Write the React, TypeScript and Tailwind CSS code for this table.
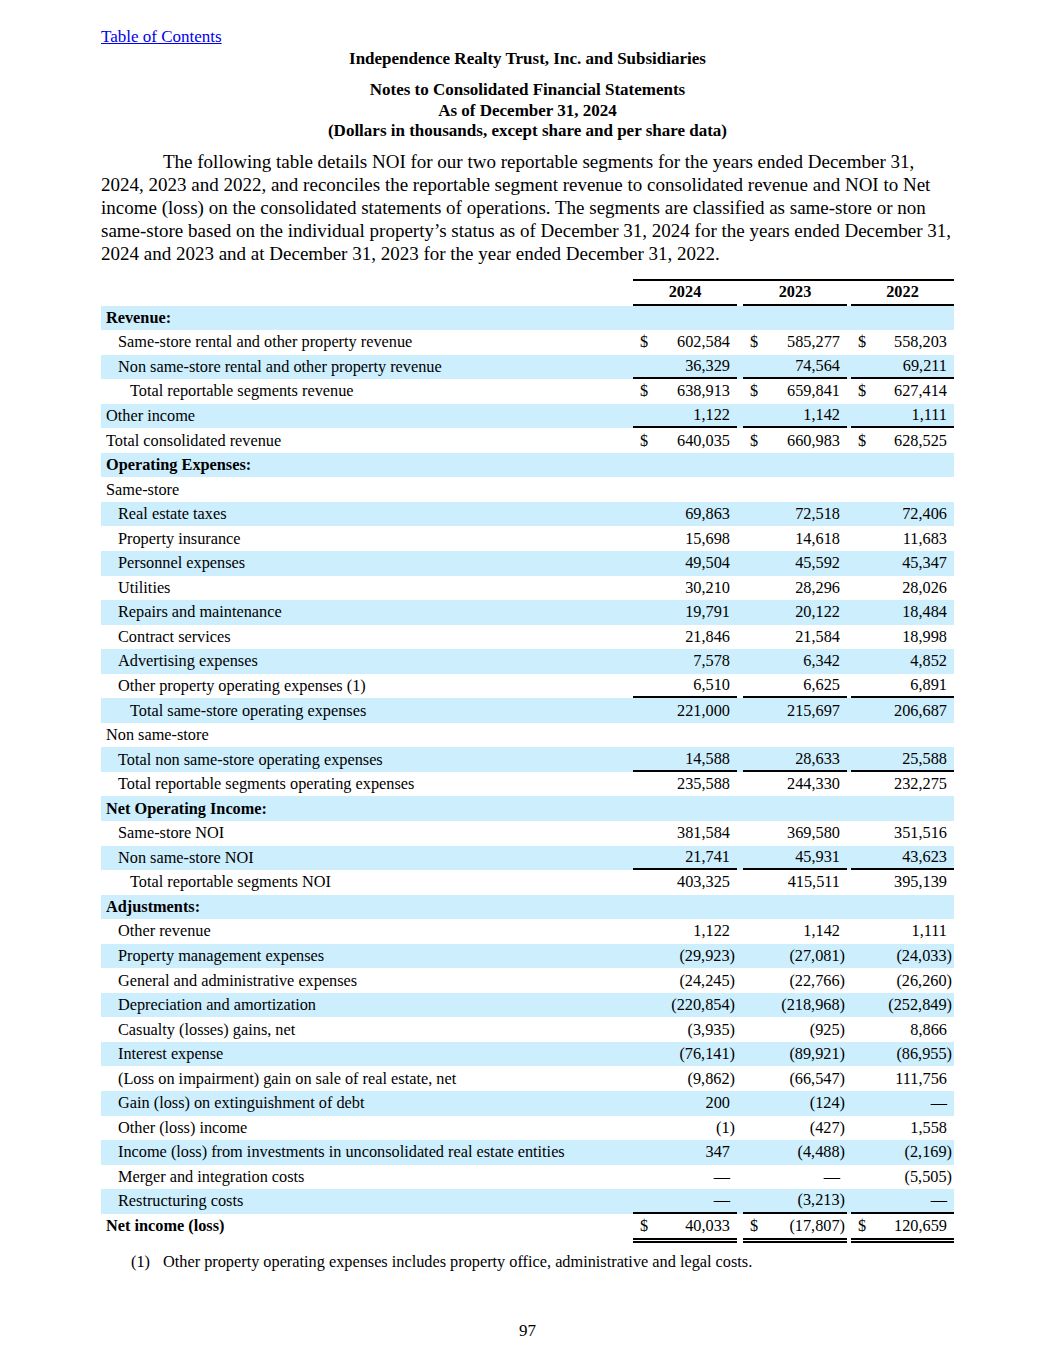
type Row = {
  label: string;
  indent?: 0 | 1 | 2;
  bold?: boolean;
  dollar?: boolean;
  vals?: [string, string, string];
  line?: "single" | "double";
};

const rows: Row[] = [
  { label: "Revenue:", bold: true },
  { label: "Same-store rental and other property revenue", indent: 1, dollar: true, vals: ["602,584", "585,277", "558,203"] },
  { label: "Non same-store rental and other property revenue", indent: 1, vals: ["36,329", "74,564", "69,211"], line: "single" },
  { label: "Total reportable segments revenue", indent: 2, dollar: true, vals: ["638,913", "659,841", "627,414"] },
  { label: "Other income", vals: ["1,122", "1,142", "1,111"], line: "single" },
  { label: "Total consolidated revenue", dollar: true, vals: ["640,035", "660,983", "628,525"] },
  { label: "Operating Expenses:", bold: true },
  { label: "Same-store" },
  { label: "Real estate taxes", indent: 1, vals: ["69,863", "72,518", "72,406"] },
  { label: "Property insurance", indent: 1, vals: ["15,698", "14,618", "11,683"] },
  { label: "Personnel expenses", indent: 1, vals: ["49,504", "45,592", "45,347"] },
  { label: "Utilities", indent: 1, vals: ["30,210", "28,296", "28,026"] },
  { label: "Repairs and maintenance", indent: 1, vals: ["19,791", "20,122", "18,484"] },
  { label: "Contract services", indent: 1, vals: ["21,846", "21,584", "18,998"] },
  { label: "Advertising expenses", indent: 1, vals: ["7,578", "6,342", "4,852"] },
  { label: "Other property operating expenses (1)", indent: 1, vals: ["6,510", "6,625", "6,891"], line: "single" },
  { label: "Total same-store operating expenses", indent: 2, vals: ["221,000", "215,697", "206,687"] },
  { label: "Non same-store" },
  { label: "Total non same-store operating expenses", indent: 1, vals: ["14,588", "28,633", "25,588"], line: "single" },
  { label: "Total reportable segments operating expenses", indent: 1, vals: ["235,588", "244,330", "232,275"] },
  { label: "Net Operating Income:", bold: true },
  { label: "Same-store NOI", indent: 1, vals: ["381,584", "369,580", "351,516"] },
  { label: "Non same-store NOI", indent: 1, vals: ["21,741", "45,931", "43,623"], line: "single" },
  { label: "Total reportable segments NOI", indent: 2, vals: ["403,325", "415,511", "395,139"] },
  { label: "Adjustments:", bold: true },
  { label: "Other revenue", indent: 1, vals: ["1,122", "1,142", "1,111"] },
  { label: "Property management expenses", indent: 1, vals: ["(29,923)", "(27,081)", "(24,033)"] },
  { label: "General and administrative expenses", indent: 1, vals: ["(24,245)", "(22,766)", "(26,260)"] },
  { label: "Depreciation and amortization", indent: 1, vals: ["(220,854)", "(218,968)", "(252,849)"] },
  { label: "Casualty (losses) gains, net", indent: 1, vals: ["(3,935)", "(925)", "8,866"] },
  { label: "Interest expense", indent: 1, vals: ["(76,141)", "(89,921)", "(86,955)"] },
  { label: "(Loss on impairment) gain on sale of real estate, net", indent: 1, vals: ["(9,862)", "(66,547)", "111,756"] },
  { label: "Gain (loss) on extinguishment of debt", indent: 1, vals: ["200", "(124)", "—"] },
  { label: "Other (loss) income", indent: 1, vals: ["(1)", "(427)", "1,558"] },
  { label: "Income (loss) from investments in unconsolidated real estate entities", indent: 1, vals: ["347", "(4,488)", "(2,169)"] },
  { label: "Merger and integration costs", indent: 1, vals: ["—", "—", "(5,505)"] },
  { label: "Restructuring costs", indent: 1, vals: ["—", "(3,213)", "—"], line: "single" },
  { label: "Net income (loss)", bold: true, dollar: true, vals: ["40,033", "(17,807)", "120,659"], line: "double" },
];

const indentClass = ["pl-[5px]", "pl-[17px]", "pl-[29px]"];

function ValueCell({ value, dollar, line }: { value?: string; dollar?: boolean; line?: Row["line"] }) {
  const negative = value?.endsWith(")");
  const border =
    line === "single"
      ? "h-[24.55px] border-b-2 border-black"
      : line === "double"
        ? "h-[24.55px] box-content border-b-[5px] border-double border-black"
        : "h-[24.55px]";
  return (
    <div className={`flex items-center justify-between pl-[7px] ${negative ? "pr-[2px]" : "pr-[7px]"} ${border}`}>
      <span>{dollar ? "$" : ""}</span>
      <span>{value}</span>
    </div>
  );
}

function TableRow({ row, shaded }: { row: Row; shaded: boolean }) {
  return (
    <div
      className={`grid h-[24.55px] grid-cols-[532px_104px_6px_104px_4px_103px] items-start ${shaded ? "bg-[#cdeefd]" : ""}`}
    >
      <div className={`flex h-[24.55px] items-center whitespace-nowrap ${indentClass[row.indent ?? 0]} ${row.bold ? "font-bold" : ""}`}>
        {row.label}
      </div>
      <ValueCell value={row.vals?.[0]} dollar={row.dollar} line={row.line} />
      <div />
      <ValueCell value={row.vals?.[1]} dollar={row.dollar} line={row.line} />
      <div />
      <ValueCell value={row.vals?.[2]} dollar={row.dollar} line={row.line} />
    </div>
  );
}

export default function App() {
  return (
    <div className="min-h-[1365px] w-[1055px] bg-white text-black" style={{ fontFamily: '"Liberation Serif", "Times New Roman", serif' }}>
      <div className="ml-[101px] w-[853px] pt-[27px]">
        <div className="text-[17px] leading-[20px]">
          <a href="#" className="text-[#0000ee] underline">
            Table of Contents
          </a>
        </div>

        <div className="mt-[2px] text-center text-[17px] font-bold leading-[20px]">
          Independence Realty Trust, Inc. and Subsidiaries
        </div>
        <div className="mt-[11px] text-center text-[17px] font-bold leading-[20.5px]">
          <div>Notes to Consolidated Financial Statements</div>
          <div>As of December 31, 2024</div>
          <div>(Dollars in thousands, except share and per share data)</div>
        </div>

        <p className="mt-[8px] whitespace-nowrap indent-[62px] text-[19px] leading-[23px]">
          The following table details NOI for our two reportable segments for the years ended December 31,
          <br />
          2024, 2023 and 2022, and reconciles the reportable segment revenue to consolidated revenue and NOI to Net
          <br />
          income (loss) on the consolidated statements of operations. The segments are classified as same-store or non
          <br />
          same-store based on the individual property’s status as of December 31, 2024 for the years ended December 31,
          <br />
          2024 and 2023 and at December 31, 2023 for the year ended December 31, 2022.
        </p>

        <div className="mt-[14px] text-[16.3px] leading-[20px]">
          <div className="grid grid-cols-[532px_321px]">
            <div />
            <div className="grid h-[27px] grid-cols-[104px_6px_104px_4px_103px] border-t-2 border-black font-bold">
              <div className="flex items-center justify-center border-b-2 border-black">2024</div>
              <div />
              <div className="flex items-center justify-center border-b-2 border-black">2023</div>
              <div />
              <div className="flex items-center justify-center border-b-2 border-black">2022</div>
            </div>
          </div>
          {rows.map((row, i) => (
            <TableRow key={row.label} row={row} shaded={i % 2 === 0} />
          ))}
        </div>

        <div className="mt-[14px] flex text-[16.3px] leading-[20px]">
          <span className="ml-[30px] w-[32px]">(1)</span>
          <span>Other property operating expenses includes property office, administrative and legal costs.</span>
        </div>

        <div className="mt-[49px] text-center text-[17px] leading-[20px]">97</div>
      </div>
    </div>
  );
}
